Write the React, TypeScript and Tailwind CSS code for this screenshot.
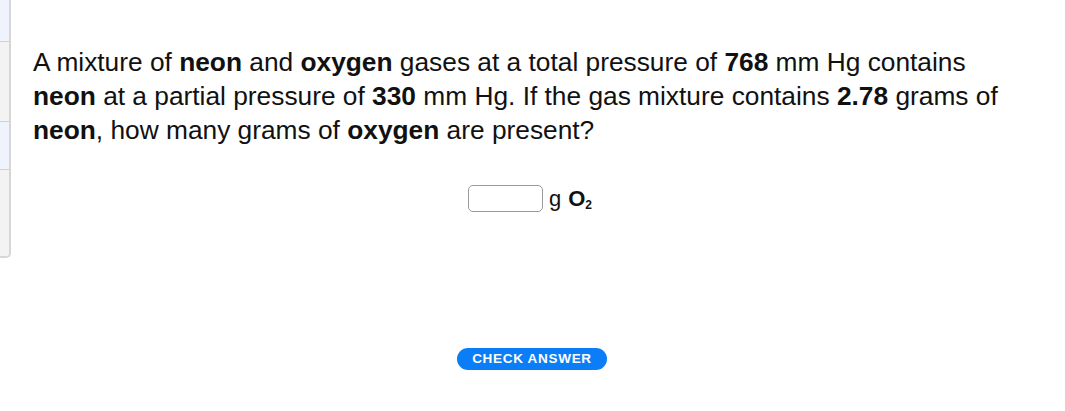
export default function App() {
  return (
    <main
      className="flex h-[411px] w-[1065px] bg-white text-[#111]"
      style={{ fontFamily: '"Liberation Sans", Arial, sans-serif' }}
    >
      <aside className="flex h-[258px] w-[11px] shrink-0 flex-col overflow-hidden rounded-br-[5px] border-r-2 border-b-2 border-[#d6d6d6]">
        <div className="h-[42px] border-b border-[#d0d0d0] bg-[#eef3fc]" />
        <div className="h-[80px] border-b border-[#d0d0d0] bg-[#f3f3f3]" />
        <div className="h-[48px] border-b border-[#d0d0d0] bg-[#eef3fc]" />
        <div className="flex-1 bg-[#f3f3f3]" />
      </aside>

      <section className="flex flex-1 flex-col pl-[22px] pt-[45px]">
        <p className="w-[985px] text-[26.3px] leading-[34px]">
          A mixture of <b>neon</b> and <b>oxygen</b> gases at a total pressure of{" "}
          <b>768</b> mm Hg contains <b>neon</b> at a partial pressure of <b>330</b> mm
          Hg. If the gas mixture contains <b>2.78</b> grams of <b>neon</b>, how many
          grams of <b>oxygen</b> are present?
        </p>

        <div className="mt-[38px] flex h-[27px] items-center justify-center pr-[38px] text-[22px] leading-none">
          <input
            type="text"
            className="h-[27px] w-[75px] rounded-[5px] border border-[#9a9a9a] bg-white outline-none"
          />
          <span className="ml-[6px]">g</span>
          <span className="ml-[7px] font-bold">
            O<sub className="text-[12px]">2</sub>
          </span>
        </div>

        <div className="mt-[136px] flex justify-center pr-[34px]">
          <button
            type="button"
            className="h-[22px] w-[150px] rounded-full bg-[#0a7df7] text-[13.5px] font-bold tracking-[0.7px] text-white"
          >
            CHECK ANSWER
          </button>
        </div>
      </section>
    </main>
  );
}
